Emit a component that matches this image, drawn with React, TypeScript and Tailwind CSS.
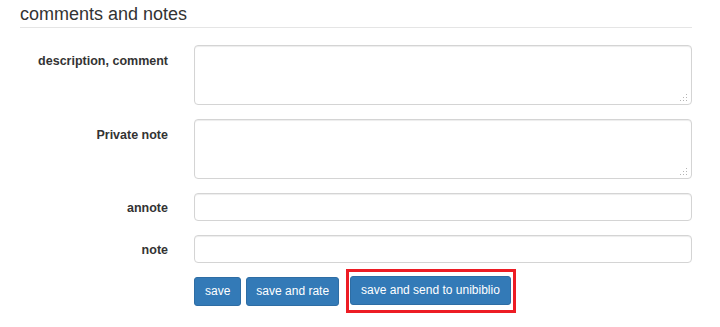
import React from 'react';

const fields = [
  { label: 'description, comment', kind: 'textarea' },
  { label: 'Private note', kind: 'textarea' },
  { label: 'annote', kind: 'input' },
  { label: 'note', kind: 'input' },
];

const controlClass =
  'block w-full rounded-[4px] border border-[#d4d4d4] bg-white shadow-[inset_0_1px_1px_rgba(0,0,0,0.075)] outline-none';

const btnClass =
  'h-[29px] rounded-[3px] border border-[#2e6da4] bg-[#337ab7] text-[12px] leading-[27px] text-white';

function Grip() {
  return (
    <svg width="8" height="7" viewBox="0 0 8 7" className="pointer-events-none absolute right-[4px] bottom-[4px]">
      <g fill="#b5b5b5">
        <rect x="6" y="0" width="1" height="1" />
        <rect x="3" y="3" width="1" height="1" />
        <rect x="6" y="3" width="1" height="1" />
        <rect x="0" y="6" width="1" height="1" />
        <rect x="3" y="6" width="1" height="1" />
        <rect x="6" y="6" width="1" height="1" />
      </g>
    </svg>
  );
}

export default function App() {
  return (
    <div className="h-[327px] w-[720px] overflow-hidden bg-white font-['Liberation_Sans',Arial,sans-serif] text-[#333]">
      <div className="ml-[20px] w-[672px]">
        <h4 className="border-b border-[#e5e5e5] pt-[4px] pb-[3px] text-[18px] leading-[20px]">comments and notes</h4>

        <div className="mt-[17px] flex flex-col gap-[14px]">
          {fields.map((f) => (
            <div key={f.label} className="flex">
              <label
                className={
                  'w-[148px] shrink-0 text-right text-[12.5px] font-bold ' +
                  (f.kind === 'textarea' ? 'pt-[7px]' : 'pt-[6px]')
                }
              >
                {f.label}
              </label>
              <div className="relative ml-[26px] flex-1">
                {f.kind === 'textarea' ? (
                  <>
                    <textarea className={controlClass + ' h-[60px] resize-none'} />
                    <Grip />
                  </>
                ) : (
                  <input type="text" className={controlClass + ' h-[28px]'} />
                )}
              </div>
            </div>
          ))}
        </div>

        <div className="mt-[6px] ml-[174px] flex items-center">
          <button className={btnClass + ' px-[10px]'}>save</button>
          <button className={btnClass + ' ml-[5px] px-[9px]'}>save and rate</button>
          <div className="ml-[7px] border-[3px] border-[#ed1c24] pt-[4px] pr-[2px] pb-[5px] pl-[1px]">
            <button className={btnClass + ' px-[10px]'}>save and send to unibiblio</button>
          </div>
        </div>
      </div>
    </div>
  );
}
